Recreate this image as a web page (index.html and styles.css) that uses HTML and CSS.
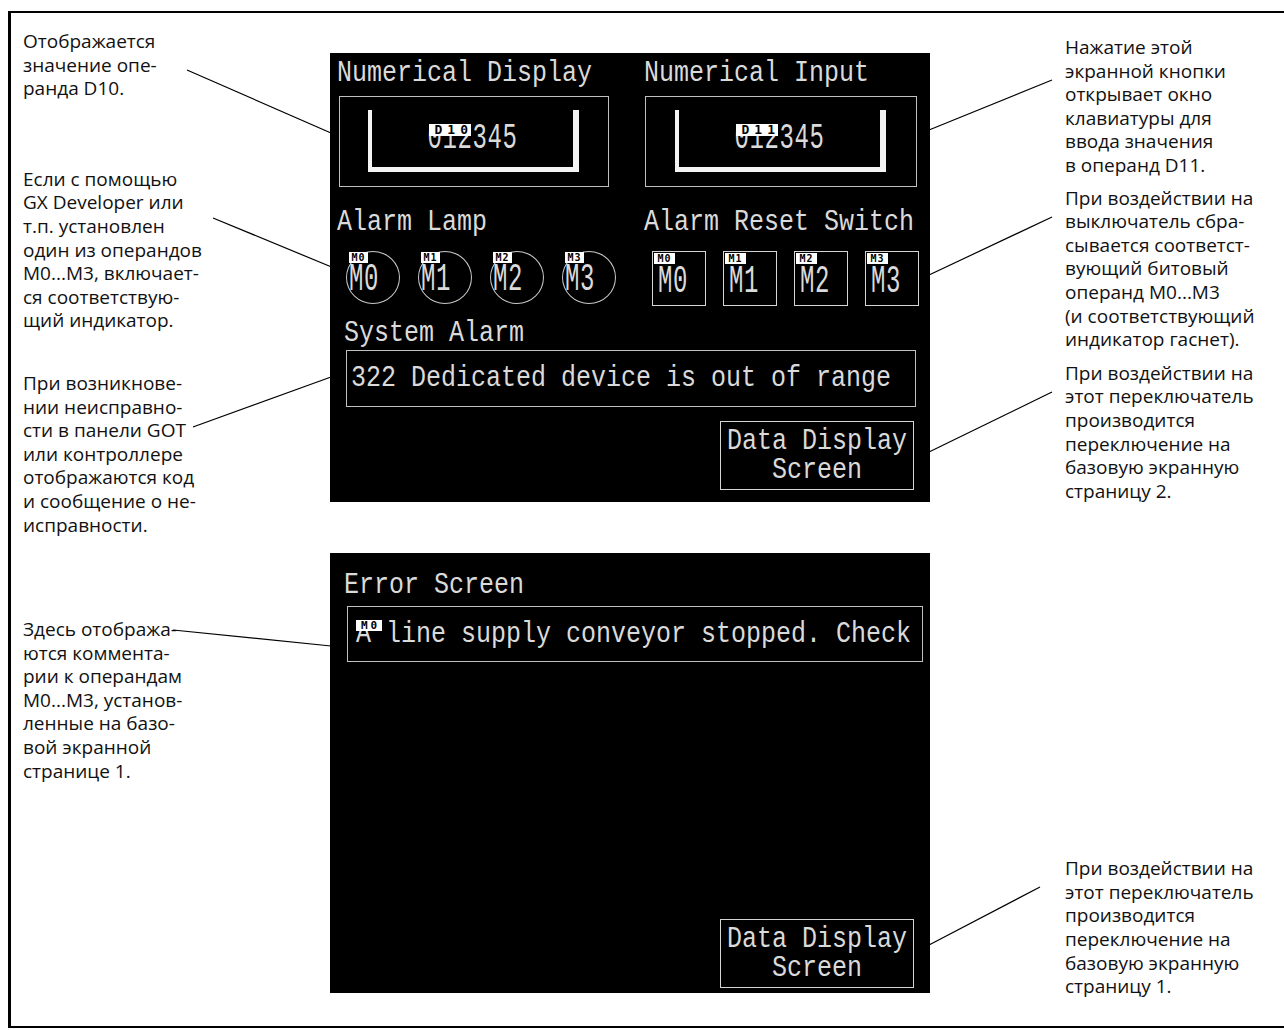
FILE: index.html
```html
<!DOCTYPE html>
<html>
<head>
<meta charset="UTF-8">
<title>Экраны GOT</title>
<link rel="stylesheet" href="styles.css">
</head>
<body>
<div id="page">
<div class="frame">

  <div class="notes notes-left">
    <p class="note l1">Отображается<br>значение опе-<br>ранда D10.</p>
    <p class="note l2">Если с помощью<br>GX Developer или<br>т.п. установлен<br>один из операндов<br>M0...M3, включает-<br>ся соответствую-<br>щий индикатор.</p>
    <p class="note l3">При возникнове-<br>нии неисправно-<br>сти в панели GOT<br>или контроллере<br>отображаются код<br>и сообщение о не-<br>исправности.</p>
    <p class="note l4">Здесь отобража-<br>ются коммента-<br>рии к операндам<br>M0...M3, установ-<br>ленные на базо-<br>вой экранной<br>странице 1.</p>
  </div>

  <div class="screens">
    <div class="screen screen-main">
      <div class="pair pair-top">
        <div class="col">
          <div class="lcd">Numerical Display</div>
          <div class="numbox">
            <div class="well">
              <span class="value"><span class="digits">012345</span><span class="tag tag-dev">D10</span></span>
            </div>
          </div>
        </div>
        <div class="col col-right">
          <div class="lcd">Numerical Input</div>
          <div class="numbox">
            <div class="well">
              <span class="value"><span class="digits">012345</span><span class="tag tag-dev">D11</span></span>
            </div>
          </div>
        </div>
      </div>

      <div class="pair pair-lamps">
        <div class="col">
          <div class="lcd">Alarm Lamp</div>
          <div class="lamps">
            <div class="lamp"><span class="tag">M0</span><span class="big">M0</span></div>
            <div class="lamp"><span class="tag">M1</span><span class="big">M1</span></div>
            <div class="lamp"><span class="tag">M2</span><span class="big">M2</span></div>
            <div class="lamp"><span class="tag">M3</span><span class="big">M3</span></div>
          </div>
        </div>
        <div class="col col-right">
          <div class="lcd">Alarm Reset Switch</div>
          <div class="lamps switches">
            <div class="switch"><span class="tag">M0</span><span class="big">M0</span></div>
            <div class="switch"><span class="tag">M1</span><span class="big">M1</span></div>
            <div class="switch"><span class="tag">M2</span><span class="big">M2</span></div>
            <div class="switch"><span class="tag">M3</span><span class="big">M3</span></div>
          </div>
        </div>
      </div>

      <div class="lcd sys-label">System Alarm</div>
      <div class="alarm-box"><span class="lcd">322 Dedicated device is out of range</span></div>
      <div class="screen-btn btn-main"><span class="lcd">Data Display</span><span class="lcd">Screen</span></div>
    </div>

    <div class="screen screen-error">
      <div class="lcd err-label">Error Screen</div>
      <div class="alarm-box err-box">
        <span class="value"><span class="lcd">A line supply conveyor stopped. Check</span><span class="tag tag-msg">M0</span></span>
      </div>
      <div class="screen-btn btn-error"><span class="lcd">Data Display</span><span class="lcd">Screen</span></div>
    </div>
  </div>

  <div class="notes notes-right">
    <p class="note r1">Нажатие этой<br>экранной кнопки<br>открывает окно<br>клавиатуры для<br>ввода значения<br>в операнд D11.</p>
    <p class="note r2">При воздействии на<br>выключатель сбра-<br>сывается соответст-<br>вующий битовый<br>операнд M0...M3<br>(и соответствующий<br>индикатор гаснет).</p>
    <p class="note r3">При воздействии на<br>этот переключатель<br>производится<br>переключение на<br>базовую экранную<br>страницу 2.</p>
    <p class="note r4">При воздействии на<br>этот переключатель<br>производится<br>переключение на<br>базовую экранную<br>страницу 1.</p>
  </div>

</div>

<svg class="leaders" width="1284" height="1030" viewBox="0 0 1284 1030">
  <line x1="187" y1="70" x2="331" y2="133"/>
  <line x1="213" y1="218" x2="334" y2="268"/>
  <line x1="193" y1="427" x2="331" y2="377"/>
  <line x1="173" y1="630" x2="331" y2="646"/>
  <line x1="929" y1="130" x2="1052" y2="80"/>
  <line x1="929" y1="275" x2="1052" y2="217"/>
  <line x1="929" y1="452" x2="1052" y2="392"/>
  <line x1="929" y1="945" x2="1040" y2="887"/>
</svg>
</div>
</body>
</html>
```

FILE: styles.css
```css
*{margin:0;padding:0}
body{background:#fff;font-family:"Open Sans","Noto Sans",sans-serif;color:#111}
#page{position:relative;width:1284px;height:1030px;overflow:hidden}

/* outer frame of the manual page */
.frame{margin:11px 0 0 8px;width:1300px;height:1013px;border:solid #000;border-width:2px 0 2px 3px;display:grid;grid-template-columns:319px 600px 1fr}

/* callout texts */
.notes{display:flex;flex-direction:column}
.notes-left{padding-left:12px}
.notes-right{padding-left:135px}
.note{font-size:19px;line-height:23.6px;white-space:nowrap}
.l1{margin-top:17px}
.l2{margin-top:67px}
.l3{margin-top:39px}
.l4{margin-top:81px}
.r1{margin-top:23px}
.r2{margin-top:9px}
.r3{margin-top:10px}
.r4{margin-top:354px}

.leaders{position:absolute;left:0;top:0;pointer-events:none}
.leaders line{stroke:#000;stroke-width:1.2}

/* GOT screens */
.screens{padding-top:40px;display:flex;flex-direction:column}
.screen{background:#000;color:#dadada;width:600px;box-sizing:border-box;padding-left:7px;display:flex;flex-direction:column;align-items:flex-start}
.screen-main{height:449px}
.screen-error{height:440px;margin-top:51px}

.lcd{display:inline-block;font-family:"Liberation Mono",monospace;font-size:25px;line-height:27px;letter-spacing:0;white-space:pre;transform:scaleY(1.2)}

.pair{display:grid;grid-template-columns:307px 286px}
.pair-top{margin-top:7px}
.pair-lamps{margin-top:22px}

.numbox{margin:9px 0 0 2px;width:270px;height:91px;border:1px solid #c0c0c0;box-sizing:border-box;padding:13px 0 0 28px}
.col-right .numbox{margin-left:1px;width:272px;padding-left:29px}
.well{width:211px;height:62px;box-sizing:border-box;border:solid #f4f4f4;border-width:0 6px 5px 4px;display:flex;justify-content:center;align-items:center}

.value{position:relative;display:inline-block}
.digits{display:inline-block;font-family:"Liberation Mono",monospace;font-size:24px;line-height:25px;letter-spacing:0.6px;transform:scaleY(1.5)}

.tag{position:absolute;left:2px;top:0;width:19px;height:11px;background:#fff;color:#000;font-family:"DejaVu Sans Mono",monospace;font-weight:bold;font-size:10px;line-height:11px;letter-spacing:1px;text-align:center}
.tag-dev{left:2px;top:-2px;width:42px;height:12px;font-size:13px;line-height:12px;letter-spacing:5px;text-indent:5px}
.tag-msg{left:0;top:-1px;width:26px;height:11px;font-size:11px;letter-spacing:3px;text-indent:3px}

.lamps{display:flex;gap:18px;margin:15px 0 0 9px}
.switches{gap:17px;margin-left:8px}
.lamp,.switch{position:relative;box-sizing:border-box;display:flex;align-items:center}
.lamp{width:54px;height:53px;border:1px solid #c8c8c8;border-radius:50%;padding:4px 0 0 2px}
.switch{width:54px;height:55px;border:1px solid #d4d4d4;padding:6px 0 0 5px}
.switch .tag{left:1px;top:1px;width:21px}
.big{display:inline-block;font-family:"Liberation Mono",monospace;font-size:24px;line-height:25px;letter-spacing:0.6px;transform:scaleY(1.65)}

.sys-label{margin:14px 0 0 7px}
.alarm-box{margin:3px 0 0 9px;width:570px;height:57px;border:1px solid #c0c0c0;box-sizing:border-box;display:flex;align-items:center;padding-left:4px}

.err-label{margin:19px 0 0 7px}
.err-box{margin:7px 0 0 10px;width:576px;height:56px;padding-left:8px}

.screen-btn{align-self:flex-end;margin:auto 16px 12px 0;width:194px;height:69px;border:1px solid #d4d4d4;box-sizing:border-box;display:flex;flex-direction:column;align-items:center;justify-content:center}
.screen-btn .lcd{line-height:29px}
.btn-error{margin-bottom:5px}
```
